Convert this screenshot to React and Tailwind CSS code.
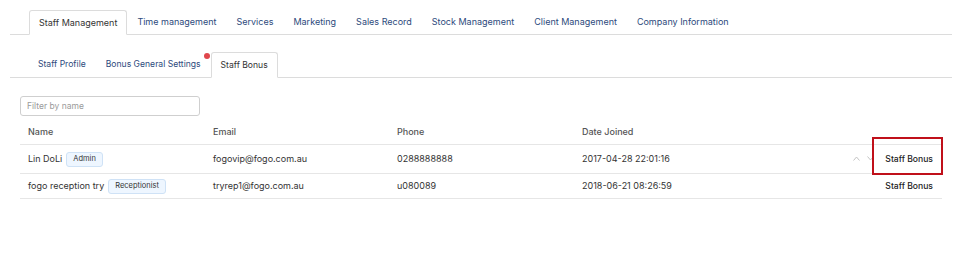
import React from "react";

const mainTabs = ["Staff Management","Time management","Services","Marketing","Sales Record","Stock Management","Client Management","Company Information"];

function Badge({ children }) {
  return (
    <span className="inline-flex items-center h-[15px] px-[6px] ml-[4px] rounded-[3px] border border-[#cfe2f6] bg-[#eef6ff] text-[7.5px] text-[#333]">{children}</span>
  );
}

export default function App() {
  const rows = [
    { name: "Lin DoLi", role: "Admin", email: "fogovip@fogo.com.au", phone: "0288888888", date: "2017-04-28 22:01:16", h: "h-[29px]", arrows: true },
    { name: "fogo reception try", role: "Receptionist", email: "tryrep1@fogo.com.au", phone: "u080089", date: "2018-06-21 08:26:59", h: "h-[25px]" },
  ];
  return (
    <div className="w-[975px] h-[253px] bg-white font-['Inter',sans-serif] text-[9px] text-[#333] overflow-hidden">
      <div className="pt-[10px] pl-[10px] pr-[23px]">
        <div className="flex border-b border-[#dcdcdc] pl-[19px] h-[25px]">
          {mainTabs.map((t, i) => (
            <div key={t} className={i === 0
              ? "flex items-center px-[9px] h-[25px] border border-[#dcdcdc] border-b-white bg-white rounded-t-[3px] text-[#333]"
              : "flex items-center px-[10px] h-[24px] text-[#2d4a7c]"}>{t}</div>
          ))}
        </div>
        <div className="flex border-b border-[#dcdcdc] pl-[18px] h-[26px] mt-[17px] text-[8.6px]">
          <div className="flex items-center px-[10px] h-[25px] text-[#2d4a7c]">Staff Profile</div>
          <div className="relative flex items-center px-[10px] h-[25px] text-[#2d4a7c]">
            Bonus General Settings
            <span className="absolute right-[1px] top-[1px] w-[6px] h-[6px] rounded-full bg-[#e0474c]"></span>
          </div>
          <div className="flex items-center px-[9px] h-[26px] border border-[#dcdcdc] border-b-white bg-white rounded-t-[3px] text-[#333]">Staff Bonus</div>
        </div>
        <div className="pl-[10px] pr-[10px]">
          <div className="mt-[18px] w-[180px] h-[20px] border border-[#cfcfcf] rounded-[3px] flex items-center pl-[6px] text-[8.5px] text-[#9a9a9a]">Filter by name</div>
          <div className="relative mt-[2px]">
            <div className="flex items-center h-[27px] border-b border-[#e6e6e6] text-[#555] font-medium pt-[1px]">
              <div className="w-[185px] pl-[8px]">Name</div>
              <div className="w-[185px] pl-[8px]">Email</div>
              <div className="w-[185px] pl-[7px]">Phone</div>
              <div className="w-[185px] pl-[7px]">Date Joined</div>
            </div>
            {rows.map((r) => (
              <div key={r.name} className={`flex items-center ${r.h} border-b border-[#e6e6e6]`}>
                <div className="w-[185px] pl-[8px] flex items-center">{r.name}<Badge>{r.role}</Badge></div>
                <div className="w-[185px] pl-[8px]">{r.email}</div>
                <div className="w-[185px] pl-[7px]">{r.phone}</div>
                <div className="w-[185px] pl-[7px]">{r.date}</div>
                <div className="flex-1 flex items-center justify-end pr-[9px]">
                  {r.arrows && (
                    <div className="flex items-center gap-[7px] mr-[11px]">
                      <svg width="7" height="5" viewBox="0 0 7 5"><path d="M0.5 4.5 L3.5 1 L6.5 4.5" fill="none" stroke="#c4c4c4" strokeWidth="1"/></svg>
                      <svg width="7" height="5" viewBox="0 0 7 5"><path d="M0.5 0.5 L3.5 4 L6.5 0.5" fill="none" stroke="#c4c4c4" strokeWidth="1"/></svg>
                    </div>
                  )}
                  <span className="font-medium text-[8.6px] text-[#222]">Staff Bonus</span>
                </div>
              </div>
            ))}
            <div className="absolute left-[852px] top-[19px] w-[71px] h-[38px] border-2 border-[#c0101a]"></div>
          </div>
        </div>
      </div>
    </div>
  );
}
